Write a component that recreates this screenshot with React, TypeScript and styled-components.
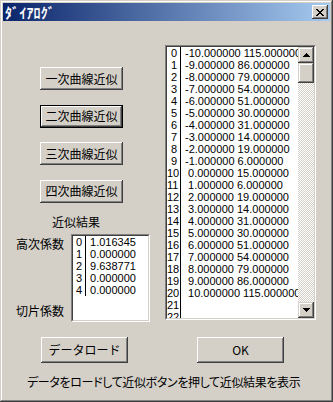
import React from "react";
import styled, { createGlobalStyle } from "styled-components";

const GlobalStyle = createGlobalStyle`
  html, body {
    margin: 0;
    padding: 0;
    background: #d4d0c8;
  }
  body {
    font-family: "Noto Sans CJK JP", "Liberation Sans", sans-serif;
  }
`;

const points: [number, number][] = [
  [-10, 115], [-9, 86], [-8, 79], [-7, 54], [-6, 51], [-5, 30], [-4, 31],
  [-3, 14], [-2, 19], [-1, 6], [0, 15], [1, 6], [2, 19], [3, 14], [4, 31],
  [5, 30], [6, 51], [7, 54], [8, 79], [9, 86], [10, 115],
];

const coefficients = ["1.016345", "0.000000", "9.638771", "0.000000", "0.000000"];

const fmt = (v: number) => (v < 0 ? "" : " ") + v.toFixed(6);

const CloseGlyph = () => (
  <svg width="8" height="7" viewBox="0 0 8 7" shapeRendering="crispEdges">
    <path
      d="M0 0h2v1H0zM6 0h2v1H6zM1 1h2v1H1zM5 1h2v1H5zM2 2h4v1H2zM3 3h2v1H3zM2 4h4v1H2zM1 5h2v1H1zM5 5h2v1H5zM0 6h2v1H0zM6 6h2v1H6z"
      fill="#000"
    />
  </svg>
);

const Arrow = ({ down }: { down?: boolean }) => (
  <svg width="7" height="4" viewBox="0 0 7 4" shapeRendering="crispEdges">
    <path
      d={down ? "M0 0h7v1H0zM1 1h5v1H1zM2 2h3v1H2zM3 3h1v1H3z" : "M3 0h1v1H3zM2 1h3v1H2zM1 2h5v1H1zM0 3h7v1H0z"}
      fill="#000"
    />
  </svg>
);

const App = () => {
  return (
    <>
      <GlobalStyle />
      <Window>
        <TitleBar>
          <Title>ﾀﾞｲｱﾛｸﾞ</Title>
          <CloseButton>
            <CloseGlyph />
          </CloseButton>
        </TitleBar>
        <Client>
          <TopArea>
            <LeftPane>
              <FitButtons>
                <FitButton>一次曲線近似</FitButton>
                <FitButton $default>二次曲線近似</FitButton>
                <FitButton>三次曲線近似</FitButton>
                <FitButton>四次曲線近似</FitButton>
              </FitButtons>
              <ResultLabel>近似結果</ResultLabel>
              <CoefRow>
                <CoefLabels>
                  <span>高次係数</span>
                  <span>切片係数</span>
                </CoefLabels>
                <ListFrame $w={79} $h={88}>
                  <ListInner>
                    <Rows>
                      {coefficients.map((c, i) => (
                        <Row key={i}>
                          <IndexCell $w={13}>{i}</IndexCell>
                          <ValueCell>{c}</ValueCell>
                        </Row>
                      ))}
                    </Rows>
                  </ListInner>
                </ListFrame>
              </CoefRow>
            </LeftPane>
            <DataList $w={151} $h={275}>
              <ListInner>
                <Rows>
                  {Array.from({ length: 23 }, (_, i) => (
                    <Row key={i}>
                      <IndexCell $w={14}>{i}</IndexCell>
                      <ValueCell>
                        {points[i] ? `${fmt(points[i][0])} ${points[i][1].toFixed(6)}` : ""}
                      </ValueCell>
                    </Row>
                  ))}
                </Rows>
                <ScrollBar>
                  <ScrollButton>
                    <Arrow />
                  </ScrollButton>
                  <ScrollThumb />
                  <ScrollTrack />
                  <ScrollButton>
                    <Arrow down />
                  </ScrollButton>
                </ScrollBar>
              </ListInner>
            </DataList>
          </TopArea>
          <BottomRow>
            <WideButton>データロード</WideButton>
            <WideButton>OK</WideButton>
          </BottomRow>
          <StatusText>データをロードして近似ボタンを押して近似結果を表示</StatusText>
        </Client>
      </Window>
    </>
  );
};

const raised = `
  box-shadow: inset -1px -1px #404040, inset 1px 1px #ffffff,
    inset -2px -2px #808080, inset 2px 2px #d4d0c8;
`;

const Window = styled.div`
  box-sizing: border-box;
  width: 333px;
  height: 402px;
  padding: 3px;
  background: #d4d0c8;
  box-shadow: inset -1px -1px #404040, inset 1px 1px #d4d0c8,
    inset -2px -2px #808080, inset 2px 2px #ffffff;
  display: flex;
  flex-direction: column;
`;

const TitleBar = styled.div`
  height: 18px;
  display: flex;
  align-items: center;
  justify-content: space-between;
  padding: 0 2px 0 2px;
  background: linear-gradient(to right, #0a246a, #a6caf0);
`;

const Title = styled.span`
  color: #ffffff;
  font-weight: bold;
  font-size: 14px;
  line-height: 18px;
  letter-spacing: 0.2px;
`;

const CloseButton = styled.div`
  width: 16px;
  height: 14px;
  display: flex;
  align-items: center;
  justify-content: center;
  background: #d4d0c8;
  box-shadow: inset -1px -1px #404040, inset 1px 1px #ffffff,
    inset -2px -2px #808080;
`;

const Client = styled.div`
  flex: 1;
  display: flex;
  flex-direction: column;
`;

const TopArea = styled.div`
  display: flex;
  align-items: flex-start;
`;

const LeftPane = styled.div`
  width: 162px;
  display: flex;
  flex-direction: column;
  padding-top: 46px;
`;

const FitButtons = styled.div`
  display: flex;
  flex-direction: column;
  gap: 14.5px;
  padding-left: 37px;
`;

const ButtonBase = styled.button`
  box-sizing: border-box;
  border: none;
  padding: 0;
  margin: 0;
  background: #d4d0c8;
  color: #000;
  font-family: "Noto Sans CJK JP", "Liberation Sans", sans-serif;
  font-size: 12px;
  line-height: 12px;
  display: flex;
  align-items: center;
  justify-content: center;
  ${raised}
`;

const FitButton = styled(ButtonBase)<{ $default?: boolean }>`
  width: 83px;
  height: 23px;
  ${(p) =>
    p.$default &&
    `
    box-shadow: inset -1px -1px #000, inset 1px 1px #000,
      inset -2px -2px #404040, inset 2px 2px #ffffff,
      inset -3px -3px #808080;
  `}
`;

const ResultLabel = styled.div`
  margin: 13px 0 0 49px;
  font-size: 12px;
  line-height: 12px;
`;

const CoefRow = styled.div`
  display: flex;
  gap: 7px;
  margin: 6px 0 0 13px;
`;

const CoefLabels = styled.div`
  display: flex;
  flex-direction: column;
  justify-content: space-between;
  padding: 4px 0 5px;
  font-size: 12px;
  line-height: 12px;
`;

const ListFrame = styled.div<{ $w: number; $h: number }>`
  box-sizing: border-box;
  width: ${(p) => p.$w}px;
  height: ${(p) => p.$h}px;
  border: 1px solid;
  border-color: #808080 #ffffff #ffffff #808080;
`;

const DataList = styled(ListFrame)`
  margin-top: 24px;
`;

const ListInner = styled.div`
  box-sizing: border-box;
  height: 100%;
  display: flex;
  overflow: hidden;
  background: #ffffff;
  border: 1px solid;
  border-color: #404040 #d4d0c8 #d4d0c8 #404040;
`;

const Rows = styled.div`
  flex: 1;
  min-width: 0;
  overflow: hidden;
`;

const Row = styled.div`
  display: flex;
  height: 12px;
  font-family: "Liberation Sans", sans-serif;
  font-size: 11px;
  line-height: 12px;
  color: #000;
  white-space: pre;
`;

const IndexCell = styled.div<{ $w: number }>`
  box-sizing: border-box;
  flex: none;
  width: ${(p) => p.$w}px;
  padding-right: 3px;
  text-align: right;
  border-right: 1px solid #000;
`;

const ValueCell = styled.div`
  padding-left: 4px;
  white-space: pre;
`;

const ScrollBar = styled.div`
  flex: none;
  width: 16px;
  display: flex;
  flex-direction: column;
`;

const ScrollButton = styled.div`
  flex: none;
  height: 16px;
  display: flex;
  align-items: center;
  justify-content: center;
  background: #d4d0c8;
  box-shadow: inset -1px -1px #404040, inset 1px 1px #d4d0c8,
    inset -2px -2px #808080, inset 2px 2px #ffffff;
`;

const ScrollThumb = styled(ScrollButton)`
  height: 20px;
`;

const ScrollTrack = styled.div`
  flex: 1;
  background: repeating-conic-gradient(#ffffff 0 25%, #d4d0c8 0 50%) 0 0 / 2px 2px;
`;

const BottomRow = styled.div`
  display: flex;
  gap: 69px;
  margin: 15px 0 0 38px;
`;

const WideButton = styled(ButtonBase)`
  width: 87px;
  height: 26px;
`;

const StatusText = styled.div`
  margin: 13px 0 0 24px;
  font-size: 12px;
  line-height: 12px;
  font-feature-settings: "palt";
  letter-spacing: -0.35px;
  white-space: nowrap;
`;

export default App;
